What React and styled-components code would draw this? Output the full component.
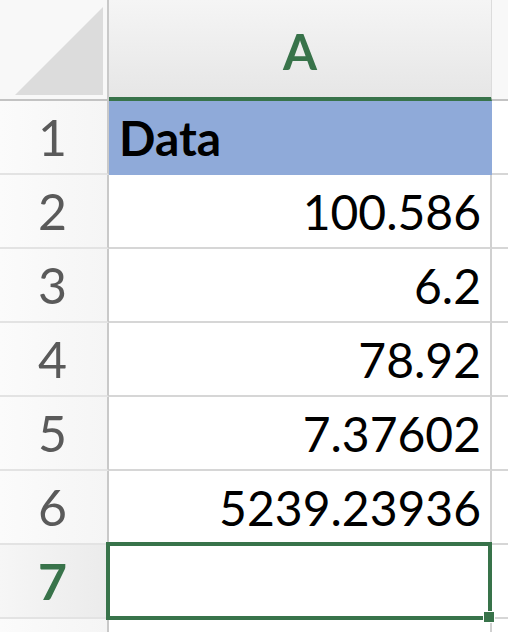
import React from "react";
import styled, { createGlobalStyle, css } from "styled-components";

const GREEN = "#38734a";

const Global = createGlobalStyle`
  html, body { margin: 0; padding: 0; background: #ffffff; overflow: hidden; }
  body { font-family: Lato, "Open Sans", sans-serif; }
`;

const Sheet = styled.div`
  display: grid;
  grid-template-columns: 109px 383px 16px;
  grid-template-rows: 101px;
  grid-auto-rows: 74px;
  width: 508px;
  height: 632px;
  overflow: hidden;
`;

const Corner = styled.div`
  box-sizing: border-box;
  background: #f8f8f8;
  border-right: 2px solid #c9c9c9;
  border-bottom: 2px solid #c3c3c3;
  display: flex;
  align-items: flex-end;
  justify-content: flex-end;
  padding: 0 4px 4px 0;
`;

const ColHeader = styled.div`
  box-sizing: border-box;
  display: flex;
  align-items: center;
  justify-content: center;
  font-family: Lato, sans-serif;
  font-weight: 700;
  font-size: 49px;
  color: ${GREEN};
  ${(p) =>
    p.$selected
      ? css`
          background: linear-gradient(180deg, #f5f5f5 0%, #e6e6e6 100%);
          border-bottom: 4px solid ${GREEN};
          border-right: 1px solid #dcdcdc;
          padding-top: 4px;
        `
      : css`
          background: #f8f8f8;
          border-bottom: 2px solid #c3c3c3;
        `}
`;

const RowHeader = styled.div`
  box-sizing: border-box;
  display: flex;
  align-items: center;
  justify-content: center;
  padding-right: 2px;
  border-right: 2px solid #c9c9c9;
  border-bottom: 2px solid #e3e3e3;
  font-family: Lato, sans-serif;
  font-size: 50px;
  ${(p) =>
    p.$selected
      ? css`
          background: linear-gradient(90deg, #f6f6f6 0%, #ebebeb 100%);
          color: ${GREEN};
          font-weight: 700;
        `
      : css`
          background: linear-gradient(90deg, #fbfbfb 0%, #f5f5f5 100%);
          color: #5a5a5a;
          font-weight: 400;
        `}
`;

const Cell = styled.div`
  position: relative;
  box-sizing: border-box;
  display: flex;
  align-items: center;
  justify-content: ${(p) => (p.$align === "left" ? "flex-start" : "flex-end")};
  padding: 0 9px 0 10px;
  font-family: Lato, sans-serif;
  font-size: 48px;
  font-weight: ${(p) => (p.$bold ? 700 : 400)};
  color: #000;
  white-space: nowrap;
  background: ${(p) => p.$fill || "#ffffff"};
  border-bottom: 2px solid ${(p) => p.$fill || "#d6d6d6"};
  border-right: ${(p) => (p.$last ? "none" : `2px solid ${p.$fill || "#d0d0d0"}`)};
  ${(p) => p.$active && css`z-index: 2;`}
`;

const Selection = styled.div`
  position: absolute;
  left: -3px;
  top: -3px;
  right: -2px;
  bottom: -3px;
  border: 4px solid ${GREEN};
  pointer-events: none;
`;

const FillHandle = styled.div`
  position: absolute;
  right: -7px;
  bottom: -7px;
  width: 10px;
  height: 10px;
  background: ${GREEN};
  border: 1px solid #ffffff;
`;

const rows = [
  { n: 1, v: "Data", header: true },
  { n: 2, v: "100.586" },
  { n: 3, v: "6.2" },
  { n: 4, v: "78.92" },
  { n: 5, v: "7.37602" },
  { n: 6, v: "5239.23936" },
  { n: 7, v: "", selected: true },
  { n: 8, v: "", hidden: true },
];

function CornerTriangle() {
  return (
    <svg width="88" height="88" viewBox="0 0 88 88">
      <polygon points="0,88 88,0 88,88" fill="#dcdcdc" />
    </svg>
  );
}

export default function App() {
  return (
    <>
      <Global />
      <Sheet>
        <Corner>
          <CornerTriangle />
        </Corner>
        <ColHeader $selected>A</ColHeader>
        <ColHeader />
        {rows.map((r) => (
          <React.Fragment key={r.n}>
            <RowHeader $selected={r.selected}>{r.hidden ? "" : r.n}</RowHeader>
            <Cell
              $align={r.header ? "left" : "right"}
              $bold={r.header}
              $fill={r.header ? "#8faad9" : undefined}
              $active={r.selected}
            >
              {r.v}
              {r.selected && (
                <Selection>
                  <FillHandle />
                </Selection>
              )}
            </Cell>
            <Cell $last />
          </React.Fragment>
        ))}
      </Sheet>
    </>
  );
}
